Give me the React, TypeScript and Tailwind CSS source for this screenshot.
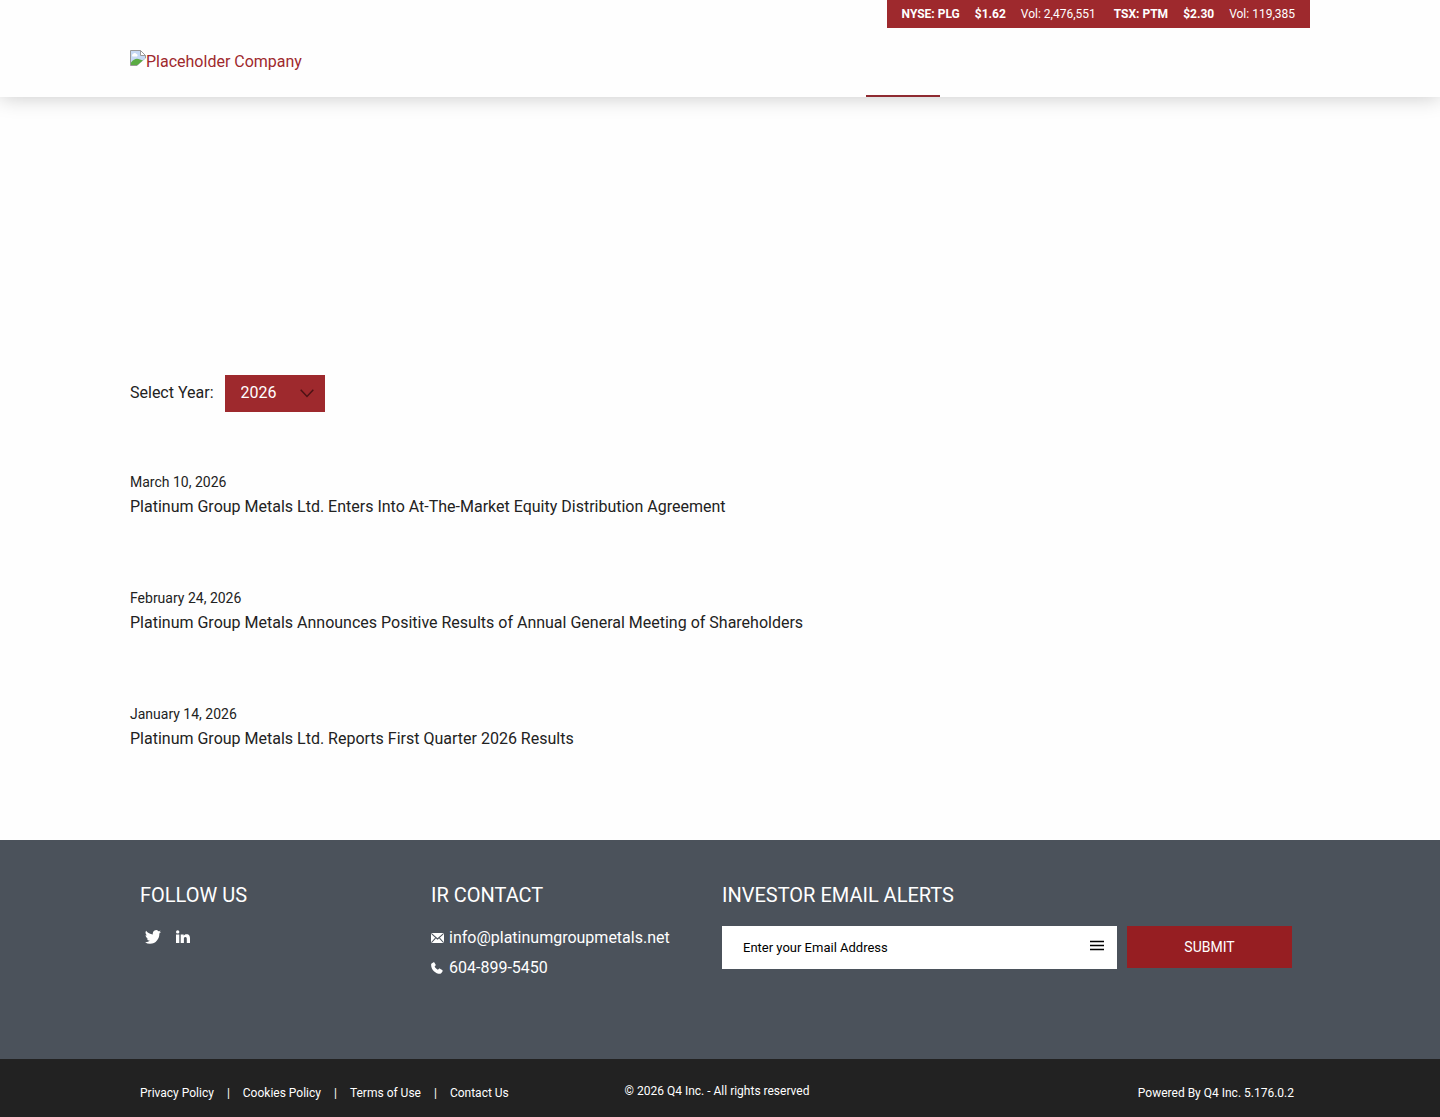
import { useState } from "react";

const quotes = [
  { symbol: "NYSE: PLG", price: "$1.62", volume: "Vol: 2,476,551" },
  { symbol: "TSX: PTM", price: "$2.30", volume: "Vol: 119,385" },
];

const releases = [
  { date: "March 10, 2026", title: "Platinum Group Metals Ltd. Enters Into At-The-Market Equity Distribution Agreement" },
  { date: "February 24, 2026", title: "Platinum Group Metals Announces Positive Results of Annual General Meeting of Shareholders" },
  { date: "January 14, 2026", title: "Platinum Group Metals Ltd. Reports First Quarter 2026 Results" },
];

const footerLinks = ["Privacy Policy", "Cookies Policy", "Terms of Use", "Contact Us"];

function LogoIcon() {
  return (
    <svg width="16" height="16" viewBox="0 0 16 16" className="shrink-0" aria-hidden="true">
      <path d="M.5 .5h10l5 5v3l-8 7h-7z" fill="#c6d9f5" stroke="#9a9a9a" />
      <path d="M10.500 .5v5h5z" fill="#fff" stroke="#9a9a9a" />
      <path d="M2.500 6.500a1.500 1.500 0 0 1 .5-2.500 2 2 0 0 1 3.500 0 1.400 1.400 0 0 1 .5 2.500z" fill="#fff" />
      <path d="M1 15v-2.500c3-4 6-4.500 9-3l3 1L7.500 15z" fill="#5bab43" />
      <path d="M16 8v8H7z" fill="#fff" />
    </svg>
  );
}

function Header() {
  return (
    <header className="relative bg-[#fefefe] shadow-[0_0_20px_rgba(0,0,0,0.22)]">
      <div className="mx-auto flex h-[97px] max-w-[1180px] justify-between">
        <a href="#" className="flex items-start self-start pt-[50px] text-base text-[#9e292d]">
          <LogoIcon />
          Placeholder Company
        </a>
        <div className="flex w-[444px] flex-col justify-between">
          <div className="flex h-7 items-center gap-[18px] self-end bg-[#9e292d] px-[15px] text-xs text-white">
            {quotes.map((q) => (
              <div key={q.symbol} className="flex gap-[15px] whitespace-nowrap">
                <span className="font-bold">{q.symbol}</span>
                <span className="font-bold">{q.price}</span>
                <span>{q.volume}</span>
              </div>
            ))}
          </div>
          <nav aria-label="Main">
            <div className="h-0.5 w-[74px] bg-[#8f2a31]" />
          </nav>
        </div>
      </div>
    </header>
  );
}

function News() {
  const [year, setYear] = useState("2026");

  return (
    <main className="mx-auto max-w-[1180px] pt-[278px] pb-[88px]">
      <div className="flex items-center gap-[11px]">
        <label htmlFor="year" className="pb-0.5">
          Select Year:
        </label>
        <div className="relative">
          <select
            id="year"
            value={year}
            onChange={(e) => setYear(e.target.value)}
            className="block h-[37px] w-[100px] appearance-none bg-[#9e292d] pb-0.5 pl-4 text-base text-white"
          >
            <option>2026</option>
            <option>2025</option>
            <option>2024</option>
          </select>
          <svg
            width="14"
            height="9"
            viewBox="0 0 14 9"
            className="pointer-events-none absolute top-3.5 right-[11px]"
            aria-hidden="true"
          >
            <path d="M.7 .8 7 7.500 13.300 .8" fill="none" stroke="#4c1214" strokeWidth="1.500" />
          </svg>
        </div>
      </div>

      <div className="mt-[58px] flex flex-col gap-[66px]">
        {releases.map((r) => (
          <article key={r.date}>
            <div className="text-sm leading-6">{r.date}</div>
            <a href="#" className="block leading-[26px]">
              {r.title}
            </a>
          </article>
        ))}
      </div>
    </main>
  );
}

function Footer() {
  const [email, setEmail] = useState("");

  return (
    <footer className="text-white">
      <div className="bg-[#4b525b]">
        <div className="mx-auto grid min-h-[219px] max-w-[1180px] grid-cols-[1fr_1fr_2fr] pt-10 pr-1.5 pl-2.5">
          <section>
            <h2 className="text-xl leading-[30px]">FOLLOW US</h2>
            <div className="mt-5 flex gap-[15px] pl-[5px]">
              <a href="#" aria-label="Twitter">
                <svg width="16" height="14" viewBox="0 2 24 20" preserveAspectRatio="none" fill="currentColor">
                  <path d="M23.950 4.570a10 10 0 0 1-2.820.770 4.960 4.960 0 0 0 2.160-2.720c-.950.550-2 .950-3.130 1.180a4.920 4.920 0 0 0-8.380 4.480C7.690 8.100 4.070 6.130 1.640 3.160a4.920 4.920 0 0 0 1.520 6.570 4.900 4.900 0 0 1-2.230-.610v.060a4.920 4.920 0 0 0 3.950 4.830 5 5 0 0 1-2.210.080 4.940 4.940 0 0 0 4.600 3.420A9.870 9.870 0 0 1 0 19.540a13.990 13.990 0 0 0 7.550 2.210c9.050 0 14-7.500 14-13.980 0-.210 0-.420-.020-.630a9.940 9.940 0 0 0 2.420-2.570z" />
                </svg>
              </a>
              <a href="#" aria-label="LinkedIn">
                <svg width="14" height="14" viewBox="0 0 14 14" fill="currentColor">
                  <circle cx="1.700" cy="1.900" r="1.700" />
                  <path d="M0 4.500h3.300V13H0zM4.700 4.500h3V5.800c.5-.9 1.400-1.500 2.800-1.500 2.900 0 3.500 2 3.500 4.300V13h-3.200V9.200c0-1-.1-2.100-1.400-2.100S7.900 8 7.900 9V13H4.700z" />
                </svg>
              </a>
            </div>
          </section>

          <section>
            <h2 className="text-xl leading-[30px]">IR CONTACT</h2>
            <div className="mt-[13px] flex flex-col leading-[30px]">
              <a href="#" className="flex items-center gap-[5px]">
                <svg width="13" height="10" viewBox="0 0 13 10" aria-hidden="true">
                  <rect width="13" height="10" rx="2" fill="currentColor" />
                  <path d="M1 1.200 6.500 6 12 1.200M1 9l3.500-3.800M12 9 8.500 5.200" fill="none" stroke="#4b525b" strokeWidth="1.100" />
                </svg>
                info@platinumgroupmetals.net
              </a>
              <a href="#" className="flex items-center gap-[5px]">
                <svg width="13" height="12" viewBox="0 0 13 12" fill="currentColor" aria-hidden="true">
                  <path d="M.6 1.600 2.200.4c.5-.3 1-.2 1.300.3l1.100 1.800c.2.400.1.800-.2 1.200l-.8.9c.6 1.400 1.700 2.500 3.200 3.200l1-.9c.4-.3.8-.4 1.300-.1l2.100 1.300c.5.300.6.900.3 1.300l-1.100 1.700c-.3.500-.7.700-1.300.7C4.600 11.800.2 8 .1 2.700c0-.4.100-.8.5-1.100z" />
                </svg>
                604-899-5450
              </a>
            </div>
          </section>

          <section className="pr-3">
            <h2 className="text-xl leading-[30px]">INVESTOR EMAIL ALERTS</h2>
            <form className="mt-4 flex items-start gap-2.5" onSubmit={(e) => e.preventDefault()}>
              <div className="relative flex-1">
                <input
                  type="email"
                  aria-label="Email address"
                  placeholder="Enter your Email Address"
                  value={email}
                  onChange={(e) => setEmail(e.target.value)}
                  className="block h-[43px] w-full bg-white pr-10 pl-[21px] text-[13px] text-black placeholder:text-black"
                />
                <button type="button" aria-label="Choose lists" className="absolute top-3.5 right-[13px] text-black">
                  <svg width="14" height="11" viewBox="0 0 14 11" className="block">
                    <path d="M0 1.500h14M0 5.500h14M0 9.500h14" stroke="currentColor" strokeWidth="1.500" />
                  </svg>
                </button>
              </div>
              <button type="submit" className="h-[42px] w-[165px] bg-[#961e22] text-sm">
                SUBMIT
              </button>
            </form>
          </section>
        </div>
      </div>

      <div className="bg-[#222]">
        <div className="mx-auto flex h-[58px] max-w-[1180px] justify-between pt-6 pr-4 pl-2.5 text-xs leading-5">
          <ul className="flex flex-1">
            {footerLinks.map((label, i) => (
              <li key={label} className="flex">
                {i > 0 && <span className="px-[13px]">|</span>}
                <a href="#">{label}</a>
              </li>
            ))}
          </ul>
          <p className="leading-4">© 2026 Q4 Inc. - All rights reserved</p>
          <a href="#" className="flex-1 text-right">
            Powered By Q4 Inc. 5.176.0.2
          </a>
        </div>
      </div>
    </footer>
  );
}

export default function App() {
  return (
    <div className="bg-[#fefefe] font-[Roboto,sans-serif] text-base text-[#222]">
      <Header />
      <News />
      <Footer />
    </div>
  );
}
